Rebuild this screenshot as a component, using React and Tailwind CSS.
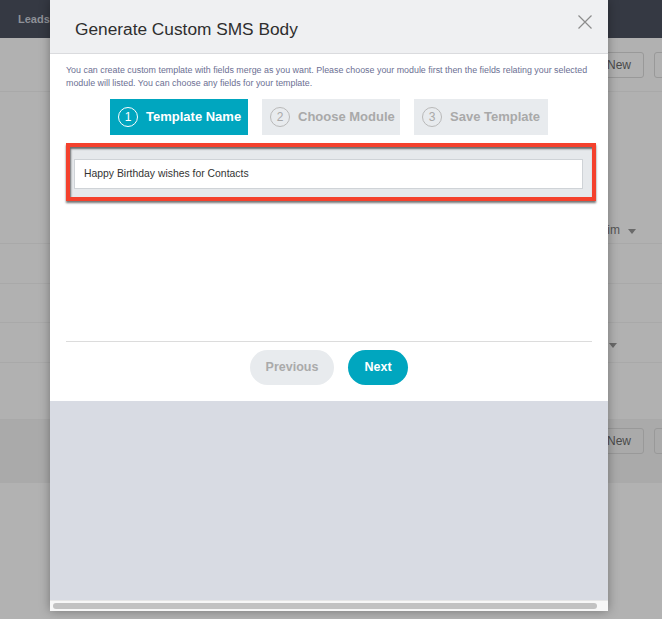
import React from "react";

const steps = [
  { n: 1, label: "Template Name", w: "w-[138px]", active: true },
  { n: 2, label: "Choose Module", w: "w-[138px]", active: false },
  { n: 3, label: "Save Template", w: "w-[134px]", active: false },
];

const Caret = () => (
  <svg width="8" height="5" viewBox="0 0 8 5" fill="#6a6a6a">
    <path d="M0 0H8L4 5Z" />
  </svg>
);

const Background = () => (
  <div className="flex flex-col w-full h-full bg-[#b1b1b1]">
    <div className="h-[38px] shrink-0 bg-[#353943] flex items-center pl-[18px]">
      <span className="text-[11px] font-bold text-[#8e9198]">Leads</span>
    </div>
    <div className="h-[54px] shrink-0 border-b border-[#a9a9a9] flex items-center justify-end gap-[10px] overflow-hidden">
      <div className="h-[26px] px-[12px] flex items-center border border-[#999] rounded-[3px] text-[12px] text-[#4a4a4a]">
        New
      </div>
      <div className="h-[26px] w-[40px] -mr-[32px] border border-[#999] rounded-[3px]" />
    </div>
    <div className="h-[152px] shrink-0 border-b border-[#a9a9a9] flex items-end justify-end pr-[26px] pb-[7px] gap-[8px]">
      <span className="text-[12px] leading-[12px] text-[#555]">Claim</span>
      <span className="mb-[2px]">
        <Caret />
      </span>
    </div>
    <div className="h-[40px] shrink-0 border-b border-[#a9a9a9]" />
    <div className="h-[39px] shrink-0 border-b border-[#a9a9a9]" />
    <div className="h-[40px] shrink-0 border-b border-[#a9a9a9] flex items-center justify-end pr-[45px] pt-[6px]">
      <Caret />
    </div>
    <div className="h-[57px] shrink-0 border-b border-[#a9a9a9]" />
    <div className="h-[63px] shrink-0 bg-[#aaaaaa] flex items-start pt-[8px] justify-end gap-[10px] overflow-hidden">
      <div className="h-[26px] px-[12px] flex items-center border border-[#999] rounded-[3px] text-[12px] text-[#4a4a4a]">
        New
      </div>
      <div className="h-[26px] w-[40px] -mr-[32px] border border-[#999] rounded-[3px]" />
    </div>
    <div className="flex-1 bg-[#b2b2b2]" />
  </div>
);

const Step = ({ n, label, w, active }) => (
  <div
    className={`${w} h-[36px] flex items-center pl-[8px] gap-[8px] ${
      active ? "bg-[#00a6bf] text-white" : "bg-[#e8ebee] text-[#a9a9a9]"
    }`}
  >
    <span
      className={`w-[20px] h-[20px] rounded-full flex items-center justify-center text-[12px] border-[1.5px] ${
        active ? "border-white" : "border-[#b9b9b9]"
      }`}
    >
      {n}
    </span>
    <span className="text-[13px] font-bold">{label}</span>
  </div>
);

export default function App() {
  return (
    <div
      className="relative w-[662px] h-[619px] overflow-hidden"
      style={{ fontFamily: '"Liberation Sans", Arial, sans-serif' }}
    >
      <Background />

      <div className="absolute left-[50px] top-0 w-[558px] h-[611px] flex flex-col bg-white shadow-[0_0_10px_rgba(0,0,0,0.35)]">
        <div className="h-[54px] shrink-0 bg-[#eff0f2] border-b border-[#dadbde] flex items-start justify-between pl-[25px] pr-[16px]">
          <h2 className="pt-[20px] text-[17.3px] leading-[18px] text-[#2e2e2e]">
            Generate Custom SMS Body
          </h2>
          <svg
            className="mt-[15px]"
            width="14"
            height="14"
            viewBox="0 0 14 14"
            fill="none"
            stroke="#8c8c8c"
            strokeWidth="1.2"
          >
            <path d="M0.5 0.5L13.5 13.5M13.5 0.5L0.5 13.5" />
          </svg>
        </div>

        <div className="bg-white flex flex-col px-[16px] pt-[10px] pb-[16px]">
          <p className="text-[8.9px] leading-[13px] text-[#6c6f93] whitespace-nowrap">
            You can create custom template with fields merge as you want. Please choose your module first then the fields relating your selected
            <br />
            module will listed. You can choose any fields for your template.
          </p>

          <div className="mt-[9px] flex justify-center gap-[14px]">
            {steps.map((s) => (
              <Step key={s.n} {...s} />
            ))}
          </div>

          <div className="mt-[8px] w-[530px] h-[58px] border-[4px] border-[#f4412d] bg-[#e6e9ec] shadow-[0_2px_2px_rgba(0,0,0,0.55),inset_1px_2px_2px_rgba(0,0,0,0.55)]">
            <div className="ml-[4px] mt-[12px] w-[509px] h-[30px] bg-white border border-[#cfd3d7] flex items-center pl-[9px] text-[10.4px] text-[#333]">
              Happy Birthday wishes for Contacts
            </div>
          </div>

          <div className="mt-[140px] h-px bg-[#dcdcdc]" />

          <div className="mt-[8px] flex justify-center gap-[14px]">
            <button className="w-[84px] h-[35px] rounded-full bg-[#e8ebee] text-[#aaaaaa] text-[12.5px] font-bold">
              Previous
            </button>
            <button className="w-[60px] h-[35px] rounded-full bg-[#00a6bf] text-white text-[12.5px] font-bold">
              Next
            </button>
          </div>
        </div>

        <div className="flex-1 bg-[#d8dbe3]" />

        <div className="h-[11px] shrink-0 bg-[#f7f7f7] border-t border-[#e6e6e6] pl-[3px] pr-[11px] pt-[2px]">
          <div className="h-[6px] rounded-full bg-[#c2c2c2]" />
        </div>
      </div>
    </div>
  );
}
